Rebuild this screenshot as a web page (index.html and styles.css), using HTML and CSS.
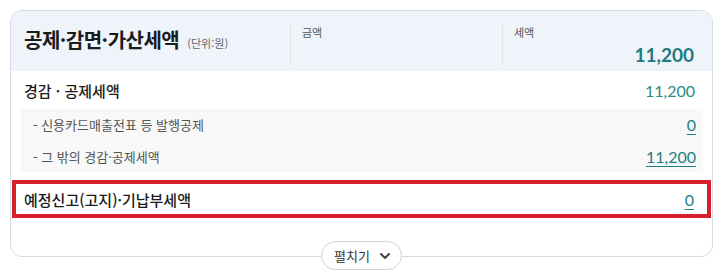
FILE: index.html
```html
<!DOCTYPE html>
<html lang="ko">
<head>
<meta charset="utf-8">
<link rel="stylesheet" href="styles.css">
</head>
<body>
<div class="wrap">
  <div class="card">
    <div class="head">
      <div class="head-title"><span class="title">공제·감면·가산세액</span><span class="unit">(단위:원)</span></div>
      <div class="head-col"><span class="col-label">금액</span></div>
      <div class="head-col"><span class="col-label">세액</span><span class="head-num">11,200</span></div>
    </div>
    <div class="body">
      <div class="row main">
        <span class="label">경감 · 공제세액</span>
        <span class="num">11,200</span>
      </div>
      <div class="sub">
        <div class="row subrow">
          <span class="label">- 신용카드매출전표 등 발행공제</span>
          <a class="num link">0</a>
        </div>
        <div class="row subrow">
          <span class="label">- 그 밖의 경감·공제세액</span>
          <a class="num link">11,200</a>
        </div>
      </div>
      <div class="row main highlight">
        <span class="label">예정신고(고지)·기납부세액</span>
        <a class="num link">0</a>
      </div>
    </div>
  </div>
  <div class="toggle-row">
    <button class="toggle">펼치기<svg width="12" height="8" viewBox="0 0 12 8"><path d="M2 2l4 4 4-4" fill="none" stroke="#444" stroke-width="2" stroke-linecap="round" stroke-linejoin="round"/></svg></button>
  </div>
</div>
</body>
</html>
```
FILE: styles.css
```css
* { box-sizing: border-box; }
html, body { margin: 0; background: #fff; }
body {
  min-height: 276px;
  padding: 10px 9px 0 10px;
  font-family: "Noto Sans CJK KR", "Noto Sans", sans-serif;
  color: #222;
}
.wrap {
  width: 703px;
}
.card {
  height: 247px;
  border: 1px solid #d5dbe3;
  border-radius: 12px;
}
.head {
  display: grid;
  grid-template-columns: 279px 212px 1fr;
  height: 60px;
  background: #eff4fb;
  border-radius: 11px 11px 0 0;
}
.head-title {
  display: flex;
  align-items: baseline;
  padding: 14px 0 0 13px;
}
.title {
  font-size: 20px;
  font-weight: 700;
  letter-spacing: -0.5px;
  color: #1b1b1b;
}
.unit {
  font-size: 11px;
  color: #666;
  margin-left: 8px;
}
.head-col {
  display: flex;
  flex-direction: column;
  margin: 13px 0 7px;
  border-left: 1px solid #dfe3e8;
  padding: 0 18px 0 11px;
}
.col-label {
  font-size: 11px;
  color: #555;
  line-height: 16px;
}
.head-num {
  font-family: Lato, "Noto Sans", sans-serif;
  font-weight: 700;
  font-size: 19px;
  color: #1e7b82;
  text-align: right;
  margin-top: 5px;
  line-height: 20px;
}
.body {
  padding: 0 1px;
}
.row {
  display: flex;
  justify-content: space-between;
  align-items: center;
}
.main {
  height: 38px;
  padding: 0 16px 0 12px;
}
.main .label {
  font-size: 15px;
  font-weight: 500;
  color: #1b1b1b;
}
.num {
  font-family: Lato, "Noto Sans", sans-serif;
  font-size: 16px;
  color: #2a8a86;
}
.link {
  text-decoration: underline;
  text-underline-offset: 3px;
  text-decoration-thickness: 1px;
  color: #227f80;
}
.sub {
  margin: 0 8px 0 9px;
  background: #f8f8f8;
  padding: 0 7px 0 12px;
}
.subrow {
  height: 31.5px;
}
.subrow .label {
  font-size: 13px;
  color: #555;
}
.highlight {
  margin-top: 8px;
  height: 38px;
  border: 4px solid #d81f2c;
  padding: 0 13px 0 8px;
}
.toggle-row {
  display: flex;
  justify-content: center;
  margin-top: -16px;
}
.toggle {
  height: 29px;
  padding: 0 10px 0 12px;
  display: flex;
  align-items: center;
  gap: 9px;
  background: #fff;
  border: 1px solid #d2d2d2;
  border-radius: 15px;
  font-family: "Noto Sans CJK KR", sans-serif;
  font-size: 13px;
  color: #333;
}
```
